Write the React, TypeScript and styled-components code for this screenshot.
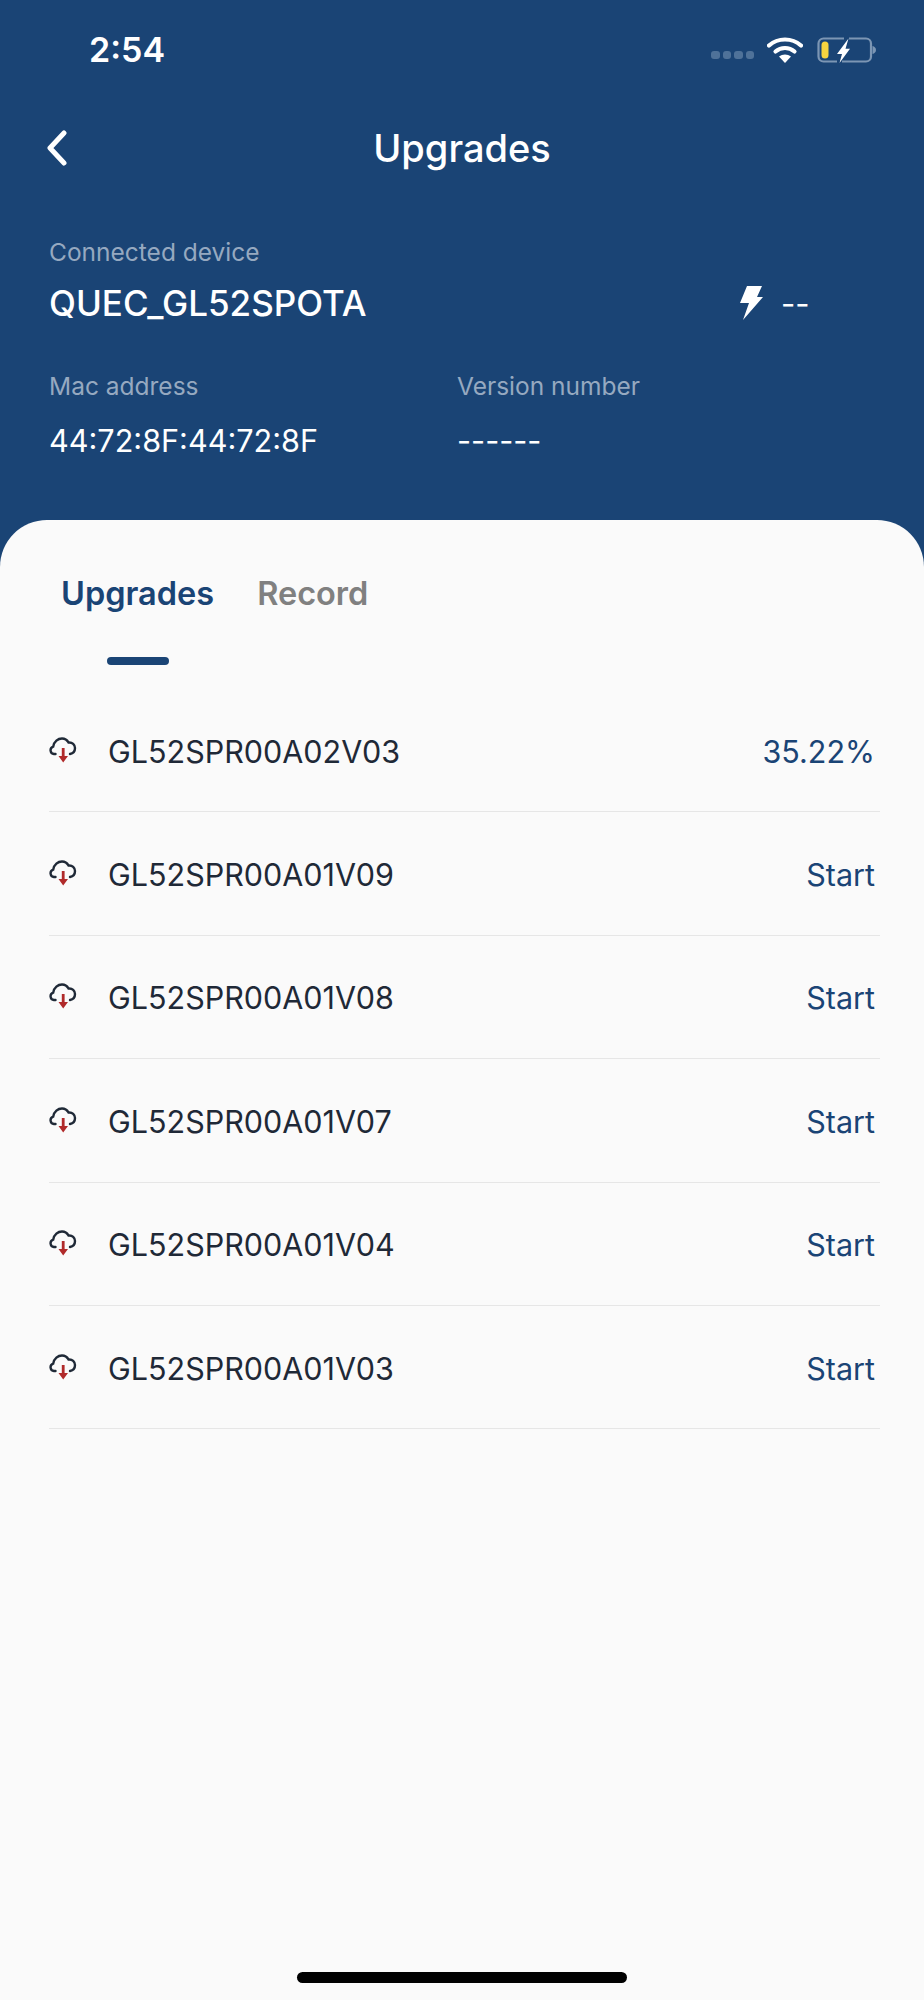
import React from "react";
import styled, { createGlobalStyle } from "styled-components";

const Global = createGlobalStyle`
  html, body { margin: 0; padding: 0; background: #1a4475; }
  body { font-family: Inter, "Liberation Sans", sans-serif; }
`;

const Page = styled.div`
  width: 924px;
  height: 2000px;
  display: flex;
  flex-direction: column;
  background: #1a4475;
  overflow: hidden;
`;

const StatusBar = styled.div`
  height: 100px;
  display: flex;
  align-items: center;
  justify-content: space-between;
  padding: 0 48px 0 89px;
  box-sizing: border-box;
`;

const Time = styled.div`
  color: #fff;
  font-size: 34px;
  font-weight: 600;
  line-height: 1;
`;

const StatusIcons = styled.div`
  display: flex;
  align-items: center;
  gap: 14px;
`;

const SignalDots = styled.div`
  display: flex;
  gap: 3px;
  margin-top: 9px;
  margin-right: -1px;
`;

const SignalDot = styled.span`
  width: 8.500px;
  height: 8px;
  border-radius: 3px;
  background: #4f7299;
`;

const NavBar = styled.div`
  position: relative;
  height: 95px;
  display: flex;
  align-items: center;
  justify-content: center;
`;

const Back = styled.svg`
  position: absolute;
  left: 44px;
  top: 30px;
`;

const Title = styled.div`
  color: #fff;
  font-size: 38px;
  font-weight: 500;
`;

const DeviceInfo = styled.div`
  padding: 43px 49px 0;
  height: 325px;
  box-sizing: border-box;
`;

const Label = styled.div`
  color: #96a9c0;
  font-size: 24.500px;
  line-height: 28px;
`;

const DeviceRow = styled.div`
  display: flex;
  align-items: center;
  justify-content: space-between;
  margin-top: 17px;
`;

const DeviceName = styled.div`
  color: #fff;
  font-size: 35px;
  font-weight: 500;
  line-height: 40px;
`;

const Power = styled.div`
  display: flex;
  align-items: center;
  gap: 18px;
  width: 136px;
  color: #fff;
  font-size: 31px;
`;

const Columns = styled.div`
  display: grid;
  grid-template-columns: 408px 1fr;
  margin-top: 49px;
`;

const Value = styled.div`
  color: #fff;
  font-size: 30.600px;
  line-height: 38px;
  margin-top: 22px;
`;

const Card = styled.div`
  flex: 1;
  background: #fafafa;
  border-radius: 47px 47px 0 0;
  padding: 0 44px 0 49px;
  position: relative;
`;

const Tabs = styled.div`
  display: flex;
  gap: 43px;
  padding: 54px 0 0 12px;
  height: 109px;
  box-sizing: border-box;
`;

const Tab = styled.div<{ $active?: boolean }>`
  font-size: 32.500px;
  font-weight: 600;
  line-height: 40px;
  color: ${(p) => (p.$active ? "#1a4475" : "#808080")};
`;

const Indicator = styled.div`
  position: absolute;
  left: 107px;
  top: 137px;
  width: 62px;
  height: 8px;
  border-radius: 4px;
  background: #1a4475;
`;

const List = styled.div`
  margin-top: 60px;
`;

const Row = styled.div`
  height: 123.4px;
  box-sizing: border-box;
  border-bottom: 1px solid #e6e6e6;
  display: flex;
  align-items: center;
  padding: 2px 5px 0 0;
`;

const RowIcon = styled.svg`
  margin-right: 31px;
  flex: none;
  margin-top: -3px;
`;

const RowName = styled.div`
  flex: 1;
  color: #1f2937;
  font-size: 30.500px;
`;

const RowAction = styled.div`
  color: #1a4475;
  font-size: 30.500px;
`;

const HomeIndicator = styled.div`
  position: absolute;
  left: 297px;
  bottom: 17px;
  width: 330px;
  height: 11px;
  border-radius: 6px;
  background: #000;
`;

const CloudIcon = () => (
  <RowIcon width="28" height="28" viewBox="0 0 28 28" fill="none">
    <path
      d="M6.500 18H5a3.800 3.800 0 0 1-.8-7.400C5 5.500 9 2.500 13 2.500c3 0 5.200 1.600 6.500 4 3.800-.5 6.500 2.200 6.500 5.500 0 3-2 5.500-5 6"
      stroke="#1f2937"
      strokeWidth="2.400"
      strokeLinecap="round"
    />
    <path d="M12.800 12h2.800v8h3.400L14.200 26.500 9.500 20h3.300z" fill="#b02a2a" />
  </RowIcon>
);

const rows: [string, string][] = [
  ["GL52SPR00A02V03", "35.22%"],
  ["GL52SPR00A01V09", "Start"],
  ["GL52SPR00A01V08", "Start"],
  ["GL52SPR00A01V07", "Start"],
  ["GL52SPR00A01V04", "Start"],
  ["GL52SPR00A01V03", "Start"],
];

export default function App() {
  return (
    <Page>
      <Global />
      <StatusBar>
        <Time>2:54</Time>
        <StatusIcons>
          <SignalDots>
            <SignalDot />
            <SignalDot />
            <SignalDot />
            <SignalDot />
          </SignalDots>
          <svg width="36" height="26" viewBox="0 0 36 26" fill="none">
            <path d="M2 8.500C11 .5 25 .5 34 8.500" stroke="#fff" strokeWidth="4.200" strokeLinecap="round" />
            <path d="M8.500 14.500C14 9.800 22 9.800 27.500 14.500" stroke="#fff" strokeWidth="4.200" strokeLinecap="round" />
            <path d="M18 26l-6-6.500c3.500-2.800 8.500-2.800 12 0z" fill="#fff" />
          </svg>
          <svg width="59" height="26" viewBox="0 0 59 26" fill="none">
            <path d="M27 1.500H6.500a5 5 0 0 0-5 5v13a5 5 0 0 0 5 5H20" stroke="#7c96b4" strokeWidth="2.200" />
            <path d="M32 1.500h17a5 5 0 0 1 5 5v13a5 5 0 0 1-5 5H25" stroke="#7c96b4" strokeWidth="2.200" />
            <rect x="4.500" y="4.500" width="7" height="17" rx="3.500" fill="#f5d33f" />
            <path d="M31.500 1.500L20 17h5l-2.500 9L33 11.700h-4.500z" fill="#fff" />
            <path d="M55.500 9c2 .4 3.500 2 3.500 4s-1.500 3.600-3.500 4z" fill="#7c96b4" />
          </svg>
        </StatusIcons>
      </StatusBar>
      <NavBar>
        <Back width="26" height="36" viewBox="0 0 26 36" fill="none">
          <path d="M20 3L6 18l14 15" stroke="#fff" strokeWidth="5" strokeLinecap="round" strokeLinejoin="round" />
        </Back>
        <Title>Upgrades</Title>
      </NavBar>
      <DeviceInfo>
        <Label>Connected device</Label>
        <DeviceRow>
          <DeviceName>QUEC_GL52SPOTA</DeviceName>
          <Power>
            <svg width="24" height="36" viewBox="0 0 24 36">
              <path d="M8 1h15l-5 11h6L4 35l6-17H1z" fill="#fff" />
            </svg>
            <span>--</span>
          </Power>
        </DeviceRow>
        <Columns>
          <div>
            <Label>Mac address</Label>
            <Value>44:72:8F:44:72:8F</Value>
          </div>
          <div>
            <Label>Version number</Label>
            <Value>------</Value>
          </div>
        </Columns>
      </DeviceInfo>
      <Card>
        <Tabs>
          <Tab $active>Upgrades</Tab>
          <Tab>Record</Tab>
        </Tabs>
        <Indicator />
        <List>
          {rows.map(([name, action]) => (
            <Row key={name}>
              <CloudIcon />
              <RowName>{name}</RowName>
              <RowAction>{action}</RowAction>
            </Row>
          ))}
        </List>
        <HomeIndicator />
      </Card>
    </Page>
  );
}
